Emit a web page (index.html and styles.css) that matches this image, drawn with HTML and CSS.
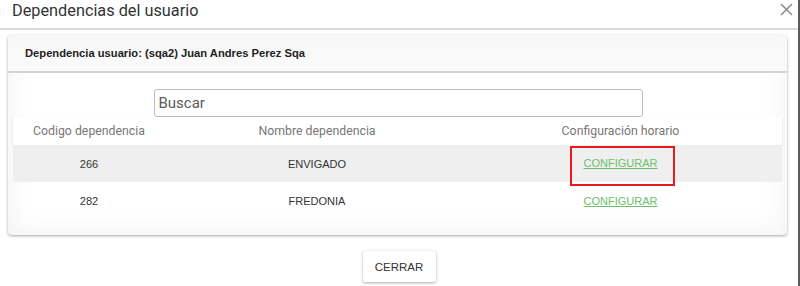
FILE: index.html
```html
<!DOCTYPE html>
<html lang="es">
<head>
<meta charset="utf-8">
<title>Dependencias del usuario</title>
<link rel="stylesheet" href="styles.css">
</head>
<body>
<div class="modal">
  <div class="modal-header">
    <h4 class="modal-title">Dependencias del usuario</h4>
    <button class="close" type="button" aria-label="Cerrar">
      <svg width="13" height="13" viewBox="0 0 13 13"><path d="M1 1L12 12M12 1L1 12" stroke="#8a8a8a" stroke-width="1.5" fill="none"/></svg>
    </button>
  </div>
  <div class="modal-body">
    <div class="card">
      <div class="card-header">Dependencia usuario: (sqa2) Juan Andres Perez Sqa</div>
      <div class="card-body">
        <div class="search-wrap"><input class="search" type="text" placeholder="Buscar"></div>
        <table class="grid">
          <thead>
            <tr><th class="c1">Codigo dependencia</th><th class="c2">Nombre dependencia</th><th class="c3">Configuración horario</th></tr>
          </thead>
          <tbody>
            <tr class="alt"><td>266</td><td>ENVIGADO</td><td class="c3"><span class="hl"><a href="#" class="link">CONFIGURAR</a></span></td></tr>
            <tr><td>282</td><td>FREDONIA</td><td class="c3"><a href="#" class="link">CONFIGURAR</a></td></tr>
          </tbody>
        </table>
      </div>
    </div>
  </div>
  <div class="modal-footer">
    <button class="btn" type="button">CERRAR</button>
  </div>
</div>
</body>
</html>
```
FILE: styles.css
```css
html, body { margin: 0; padding: 0; background: #fff; }
body { font-family: "Liberation Sans", Arial, sans-serif; color: #333; }
.modal { width: 800px; border-right: 2px solid #5a5a5a; min-height: 286px; box-sizing: border-box; }
.modal-header {
  height: 28px; border-bottom: 2px solid #dadada; box-sizing: content-box;
  display: flex; align-items: flex-start; justify-content: space-between; padding: 0 5px 0 12px;
}
.modal-title { margin: 0; padding-top: 1px; font-weight: normal; font-size: 16.3px; line-height: 20px; color: #333; font-family: Roboto, "Liberation Sans", sans-serif; }
.close { border: 0; background: none; padding: 0; margin-top: 3px; display: flex; }
.modal-body { padding: 5px 11px 0 8px; }
.card {
  border-radius: 4px;
  box-shadow: 0 1px 3px rgba(0,0,0,0.35), inset 0 0 30px rgba(0,0,0,0.06);
  background: #fff;
  padding-bottom: 16px;
}
.card-header {
  height: 36px; display: flex; align-items: center; padding-left: 17px;
  font-size: 11.2px; font-weight: bold; color: #222;
  border-bottom: 2px solid #d4d4d4;
  background: linear-gradient(#f7f7f7, #fbfbfb);
  border-radius: 4px 4px 0 0;
}
.card-body { padding: 16px 5px 0 5px; }
.search-wrap { display: flex; justify-content: center; padding-left: 1px; }
.search {
  width: 489px; height: 28px; box-sizing: border-box;
  border: 1px solid #bdbdbd; border-radius: 3px; padding: 0 4px;
  font-family: Roboto, sans-serif; font-size: 15px; color: #333;
}
.search::placeholder { color: #5a5a5a; }
.grid { width: 100%; border-collapse: collapse; }
.grid thead tr { box-shadow: 0 1px 2px rgba(0,0,0,0.14); }
.grid th {
  font-family: Roboto, sans-serif; font-weight: normal; font-size: 12.3px; color: #777;
  height: 28px; padding: 0; background: #fff; text-align: center;
}
.grid .c1 { width: 152px; }
.grid .c2 { width: 304px; }
.grid .c3 { padding-right: 10px; }
.grid td { height: 37px; padding: 0; text-align: center; font-size: 11px; color: #333; }
.grid tr.alt td { background: #efefef; }
.link { color: #6cc06c; font-size: 11px; text-decoration: underline; }
.hl { display: inline-block; border: 2px solid #e51c1c; padding: 9px 16px 15px 12px; margin: -1px 0 -6px 4px; }
.modal-footer { display: flex; justify-content: center; padding: 16px 0 0 0; }
.btn {
  width: 73px; height: 31px; background: #fff; border: 0; border-radius: 2px;
  box-shadow: 0 1px 3px rgba(0,0,0,0.3), 0 0 1px rgba(0,0,0,0.15);
  font-family: "Liberation Sans", Arial, sans-serif; font-size: 11.5px; color: #333;
}
```
